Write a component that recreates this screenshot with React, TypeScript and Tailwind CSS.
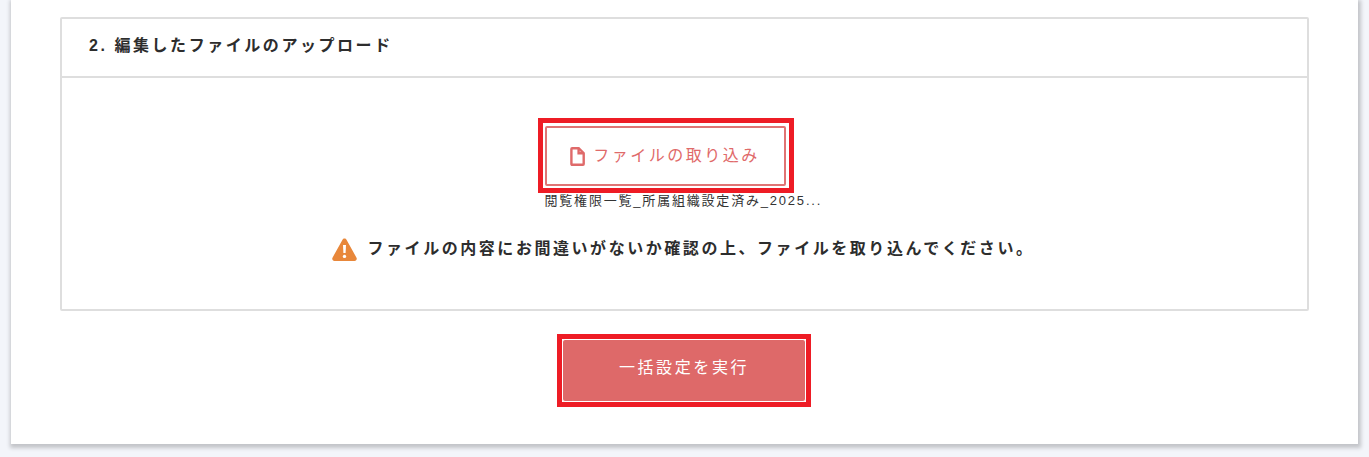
const fontStack = { fontFamily: '"Liberation Sans", "Noto Sans CJK JP", sans-serif' };

function FileIcon() {
    return (
        <svg viewBox="0 0 15 19" className="w-[15px] h-[19px] fill-none stroke-[#df6a6a] stroke-[2.4]">
            <path d="M1.4 1.9c0-.3.2-.7.7-.7h6.6l5 5v10.9c0 .4-.3.7-.7.7H2.1c-.4 0-.7-.3-.7-.7z" />
            <path d="M8.6 1.2v5h5" />
        </svg>
    );
}

function WarningIcon() {
    return (
        <svg viewBox="0 0 25 23" className="w-[25px] h-[23px]">
            <path d="M12.5 0.5c.9 0 1.6.5 2 1.2l10 18c.8 1.5-.2 3.3-2 3.3H2.5c-1.8 0-2.8-1.8-2-3.3l10-18c.4-.7 1.1-1.2 2-1.2z" fill="#e8873a" />
            <path d="M11 7h3l-.4 8h-2.2z" fill="#ffffff" />
            <circle cx="12.5" cy="18.4" r="1.7" fill="#ffffff" />
        </svg>
    );
}

export default function App() {
    return (
        <div className="h-[457px] overflow-hidden bg-[#f3f5fa] px-[11px] text-[#333]" style={fontStack}>
            <div className="w-[1347px] h-[444px] bg-white pt-[17px] px-[49px] shadow-[1px_2px_4px_2px_rgba(0,0,0,0.2)]">
                <section className="h-[294px] border-2 border-[#dedede] rounded-[2px]">
                    <h2 className="h-[59px] border-b-2 border-[#dedede] pl-[27px] pb-[4px] flex items-center text-[16px] font-bold tracking-[2.55px] text-[#2d2d2d]">
                        2. 編集したファイルのアップロード
                    </h2>
                    <div className="flex flex-col items-center pt-[40px]">
                        <div className="w-[294px]">
                            <div className="w-[256px] border-[5px] border-[#ee1c25] pt-[3px] pb-[2px] pl-[2px] pr-[3px]">
                                <button className="w-[241px] h-[60px] border-2 border-[#e07474] rounded-[2px] bg-white flex items-center justify-center gap-[8px] text-[16px] tracking-[2.5px] text-[#df6a6a]">
                                    <FileIcon />
                                    ファイルの取り込み
                                </button>
                            </div>
                            <p className="h-[14px] pl-[7px] pt-px text-[13px] leading-[14px] tracking-[1.8px] text-[#333] whitespace-nowrap">
                                閲覧権限一覧_所属組織設定済み_2025...
                            </p>
                        </div>
                        <div className="mt-[30px] flex items-center gap-[10px] pr-[2px] text-[16px] font-bold tracking-[2.55px] text-[#2d2d2d]">
                            <WarningIcon />
                            ファイルの内容にお間違いがないか確認の上、ファイルを取り込んでください。
                        </div>
                    </div>
                </section>
                <div className="flex justify-center pt-[23px] pr-[1px]">
                    <div className="border-[5px] border-[#ee1c25]">
                        <button className="block w-[244px] h-[63px] border border-white rounded-[3px] bg-[#de6969] pb-[5px] text-white text-[16px] tracking-[2.6px]">
                            一括設定を実行
                        </button>
                    </div>
                </div>
            </div>
        </div>
    );
}
